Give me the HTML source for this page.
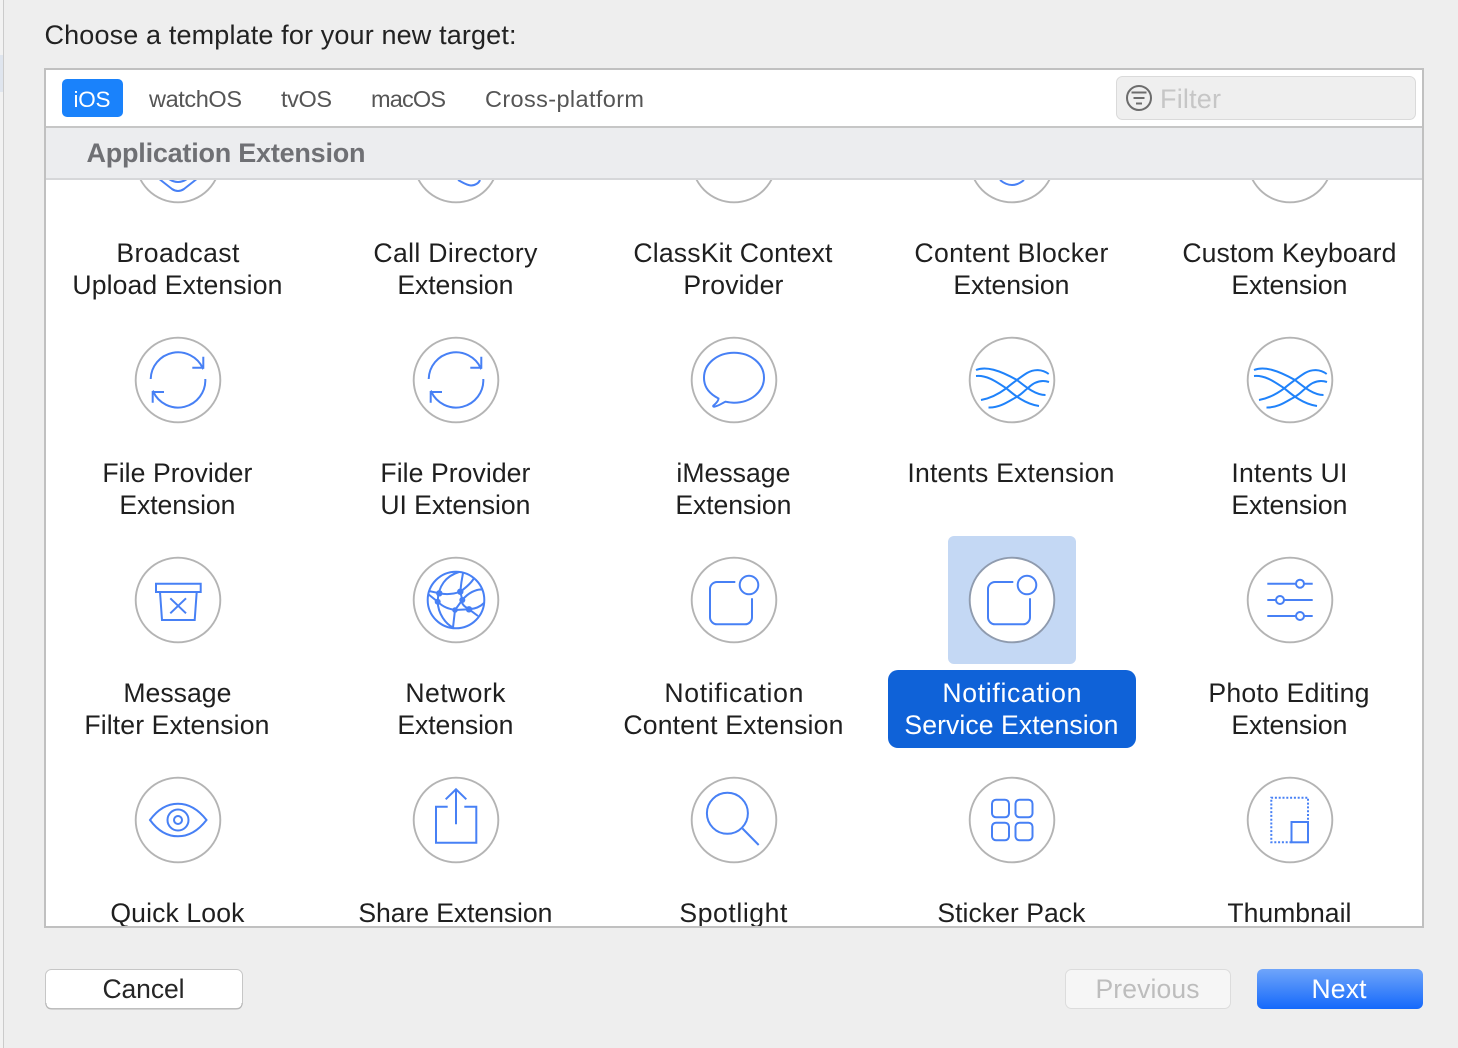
<!DOCTYPE html>
<html><head><meta charset="utf-8"><style>
html,body{margin:0;padding:0;width:1458px;height:1048px;overflow:hidden;background:#eee}
svg{display:block}
text{font-family:"Liberation Sans",sans-serif}
.l{font-size:26.6px;fill:#1f1f1f}
.t{font-size:23.5px;fill:#555}
.i{fill:none;stroke:#4780f5;stroke-width:2}
.c{fill:#fff;stroke:#b4b4b4;stroke-width:1.9}
</style></head><body>
<svg width="1458" height="1048" viewBox="0 0 1458 1048" xmlns="http://www.w3.org/2000/svg">
<defs><linearGradient id="n" x1="0" y1="0" x2="0" y2="1"><stop offset="0" stop-color="#6fa5fa"/><stop offset="1" stop-color="#1569fb"/></linearGradient></defs>
<rect width="1458" height="1048" fill="#eeeeee"/>
<rect x="0" y="0" width="3" height="1048" fill="#f2f2f2"/>
<rect x="0" y="55" width="3" height="37" fill="#dfe5ee"/>
<rect x="3" y="0" width="1" height="1048" fill="#cbcbcb"/>
<rect x="45" y="69" width="1378" height="858" fill="#fff"/>

<rect x="948" y="536" width="128" height="128" rx="6" fill="#c4d8f4"/>
<rect x="888" y="670" width="248" height="78" rx="10" fill="#0f62d8"/>

<!-- row 1 -->
<g transform="translate(178,160)"><circle class="c" r="42.3"/><path class="i" d="M-20 18L-6 29Q0 33 6 29L20 18M-9 19Q0 25 9 19"/></g>
<g transform="translate(456,160)"><circle class="c" r="42.3"/><path class="i" d="M2 20C6 22 10 25 15 25.5C19 25.5 23 23 24 20"/></g>
<g transform="translate(734,160)"><circle class="c" r="42.3"/></g>
<g transform="translate(1012,160)"><circle class="c" r="42.3"/><path class="i" d="M-12 20Q0 30 12 20"/></g>
<g transform="translate(1290,160)"><circle class="c" r="42.3"/></g>

<!-- row 2 -->
<g transform="translate(178,380)"><circle class="c" r="42.3"/><path class="i" d="M-27.3 -1A27.3 27.3 0 0 1 24.8 -11.8L25.3 -12.3M14.3 -12.3H25.3V-23.3M27.3 -1A27.3 27.3 0 0 1 -24.8 11.6L-25.3 12M-14 12H-25.3V22.7"/></g>
<g transform="translate(456,380)"><circle class="c" r="42.3"/><path class="i" d="M-27.3 -1A27.3 27.3 0 0 1 24.8 -11.8L25.3 -12.3M14.3 -12.3H25.3V-23.3M27.3 -1A27.3 27.3 0 0 1 -24.8 11.6L-25.3 12M-14 12H-25.3V22.7"/></g>
<g transform="translate(734,380)"><circle class="c" r="42.3"/><path class="i" d="M-8.5 21.7C-11 22.5 -15 26 -20 26.7C-21 26.7 -21 26 -20.5 25.5C-17.5 23 -15.5 21 -15.5 18.5C-24 14 -30 8 -30 -2.3C-30 -16 -17 -27.3 0 -27.3C17 -27.3 30 -16 30 -2.3C30 11.5 17 22.7 0 22.7C-3 22.7 -6 22.2 -8.5 21.7Z"/></g>
<g transform="translate(1012,380)"><circle class="c" r="42.3"/><path class="i" style="stroke:#1f82fa" d="M-36 -10C-26 -14 -13 -10 5 0C15 8 24 15 33.5 15M-36 -4C-24 -5 -14 3 -5.7 8.3C0 13 12 24 27 26M-31 20C-20 18 -12 13 -5.7 8.3C-2 5 10 -4 15 -7C22 -11 30 -11 36.7 -6M-23.5 27.5C-12 28 -3 21 5 16.7C10 14 13 10 15.7 8.3C21 3 28 -1 37 2"/></g>
<g transform="translate(1290,380)"><circle class="c" r="42.3"/><path class="i" style="stroke:#1f82fa" d="M-36 -10C-26 -14 -13 -10 5 0C15 8 24 15 33.5 15M-36 -4C-24 -5 -14 3 -5.7 8.3C0 13 12 24 27 26M-31 20C-20 18 -12 13 -5.7 8.3C-2 5 10 -4 15 -7C22 -11 30 -11 36.7 -6M-23.5 27.5C-12 28 -3 21 5 16.7C10 14 13 10 15.7 8.3C21 3 28 -1 37 2"/></g>

<!-- row 3 -->
<g transform="translate(178,600)"><circle class="c" r="42.3"/><path class="i" d="M-22 -16.3H22.7V-8H-22ZM-18 -8L-16 20H16.7L18.7 -8M-7.7 -1.7L8 13.3M8 -1.7L-7.7 13.3"/></g>
<g transform="translate(456,600)"><circle class="c" r="42.3"/>
<circle class="i" r="28.3"/>
<path class="i" d="M3 -28C-10 -24 -18 -14 -18.3 1.7C-18 14 -10 24 -3 27.5M-27 -9L-16.7 -6.7C-8 -5 -2 -6 4.3 -8.3C5 -16 6 -22 7 -27M4.3 -8.3L6.3 0L-1 10L-3 27.5M-28 -6L-18.3 1.7C-12 8 -6 9 -1 10L13 9.3L22 16M6.3 0C4 5 13 9 13 9.3M4.3 -8.3C12 -14 16 -18 18 -22M6.3 0C12 -7 20 -11 26 -10.5M13 9.3C18 9 24 7 28 3"/>
<g fill="#4780f5"><circle cx="-16.700" cy="-6.700" r="3.200"/><circle cx="4.300" cy="-8.300" r="3.200"/><circle cx="6.300" cy="0" r="3"/><circle cx="-18.300" cy="1.700" r="3"/><circle cx="-1" cy="10" r="2.800"/><circle cx="13" cy="9.300" r="3.200"/></g></g>
<g transform="translate(734,600)"><circle class="c" r="42.3"/><path class="i" d="M1.300 -18H-17A7 7 0 0 0 -24 -11V17.300A7 7 0 0 0 -17 24.300H11A7 7 0 0 0 18 17.300V-1.700"/><circle class="i" cx="15" cy="-15" r="9.300"/></g>
<g transform="translate(1012,600)"><circle class="c" style="stroke:#8f9bae" r="42.3"/><path class="i" d="M1.300 -18H-17A7 7 0 0 0 -24 -11V17.300A7 7 0 0 0 -17 24.300H11A7 7 0 0 0 18 17.300V-1.700"/><circle class="i" cx="15" cy="-15" r="9.300"/></g>
<g transform="translate(1290,600)"><circle class="c" r="42.3"/><path class="i" d="M-22.700 -16.300H22.700M-22.700 0H22.700M-22.700 16H22.700"/><g class="i" style="fill:#fff"><circle cx="10" cy="-16.300" r="4"/><circle cx="-10" cy="0" r="4"/><circle cx="10" cy="16" r="4"/></g></g>

<!-- row 4 -->
<g transform="translate(178,820)"><circle class="c" r="42.3"/><path class="i" d="M-28 0C-20 -11 -10 -16.300 0 -16.300C10 -16.300 20 -11 28.500 0C20 11 10 16.300 0 16.300C-10 16.300 -20 11 -28 0Z"/><circle class="i" r="10.500"/><circle class="i" r="4"/></g>
<g transform="translate(456,820)"><circle class="c" r="42.3"/><path class="i" d="M-8.300 -13.300H-20V22.700H20.300V-13.300H8.300M0 4.300V-30.700M-10.300 -20.700L0 -30.700L10.300 -20.700"/></g>
<g transform="translate(734,820)"><circle class="c" r="42.3"/><circle class="i" cx="-6.600" cy="-6.700" r="20.500"/><path class="i" d="M8.500 8.500L24.700 25"/></g>
<g transform="translate(1012,820)"><circle class="c" r="42.3"/><rect class="i" x="-20" y="-20.300" width="17" height="17.600" rx="4"/><rect class="i" x="3.500" y="-20.300" width="17" height="17.600" rx="4"/><rect class="i" x="-20" y="2.700" width="17" height="17.600" rx="4"/><rect class="i" x="3.500" y="2.700" width="17" height="17.600" rx="4"/></g>
<g transform="translate(1290,820)"><circle class="c" r="42.3"/><path class="i" stroke-dasharray="2 1.800" d="M1.500 22.300H-18.700V-22.300H18V2"/><rect class="i" x="1.500" y="2" width="16.500" height="20.300"/></g>

<!-- labels -->
<g class="l" transform="translate(-0.6,0)">
<text x="117" y="262" textLength="123">Broadcast</text><text x="73" y="294" textLength="210">Upload Extension</text>
<text x="374" y="262" textLength="164">Call Directory</text><text x="398" y="294" textLength="116">Extension</text>
<text x="634" y="262" textLength="199">ClassKit Context</text><text x="684" y="294" textLength="100">Provider</text>
<text x="915" y="262" textLength="194">Content Blocker</text><text x="954" y="294" textLength="116">Extension</text>
<text x="1183" y="262" textLength="214">Custom Keyboard</text><text x="1232" y="294" textLength="116">Extension</text>

<text x="103" y="482" textLength="150">File Provider</text><text x="120" y="514" textLength="116">Extension</text>
<text x="381" y="482" textLength="150">File Provider</text><text x="381" y="514" textLength="150">UI Extension</text>
<text x="677" y="482" textLength="114">iMessage</text><text x="676" y="514" textLength="116">Extension</text>
<text x="908" y="482" textLength="207">Intents Extension</text>
<text x="1232" y="482" textLength="116">Intents UI</text><text x="1232" y="514" textLength="116">Extension</text>

<text x="124" y="702" textLength="108">Message</text><text x="85" y="734" textLength="185">Filter Extension</text>
<text x="406" y="702" textLength="100">Network</text><text x="398" y="734" textLength="116">Extension</text>
<text x="665" y="702" textLength="139">Notification</text><text x="624" y="734" textLength="220">Content Extension</text>
<text x="943" y="702" textLength="139" style="fill:#fff">Notification</text><text x="905" y="734" textLength="214" style="fill:#fff">Service Extension</text>
<text x="1209" y="702" textLength="161">Photo Editing</text><text x="1232" y="734" textLength="116">Extension</text>

<text x="111" y="922" textLength="134">Quick Look</text>
<text x="359" y="922" textLength="194">Share Extension</text>
<text x="680" y="922" textLength="108">Spotlight</text>
<text x="938" y="922" textLength="148">Sticker Pack</text>
<text x="1228" y="922" textLength="124">Thumbnail</text>
</g>

<!-- clip bottom -->
<rect x="44" y="926" width="1380" height="122" fill="#eeeeee"/>
<!-- top white bar and header -->
<rect x="45" y="69" width="1378" height="58" fill="#fff"/>
<rect x="45" y="128" width="1378" height="50" fill="#ecedef"/>
<rect x="45" y="126" width="1378" height="2" fill="#c6c6c6"/>
<rect x="45" y="178" width="1378" height="2" fill="#d6d7d9"/>
<rect x="45" y="69" width="1378" height="858" fill="none" stroke="#c0c0c0" stroke-width="2"/>

<text x="44.500" y="44" font-size="27" fill="#222" textLength="472">Choose a template for your new target:</text>

<rect x="62" y="79" width="61" height="38" rx="5" fill="#1a82fb"/>
<text x="73.500" y="107" font-size="22.500" fill="#fff" textLength="37">iOS</text>
<text class="t" x="149" y="107" textLength="93">watchOS</text>
<text class="t" x="281" y="107" textLength="51">tvOS</text>
<text class="t" x="371" y="107" textLength="75">macOS</text>
<text class="t" x="485" y="107" textLength="159">Cross-platform</text>

<rect x="1116.500" y="76.500" width="299" height="43" rx="6" fill="#efefef" stroke="#dadada"/>
<circle cx="1139" cy="98" r="12" fill="none" stroke="#6c6c6c" stroke-width="2"/>
<path d="M1131.500 92.500H1146.500M1133.500 98H1144.500M1136 103.500H1142" fill="none" stroke="#6c6c6c" stroke-width="2"/>
<text x="1160" y="108" font-size="27" fill="#c6c6c6" textLength="61">Filter</text>

<text x="86.500" y="162" font-size="27" font-weight="700" fill="#6f7074" textLength="279">Application Extension</text>

<!-- buttons -->
<rect x="45.500" y="969.500" width="197" height="39" rx="6" fill="#fff" stroke="#c6c6c6"/>
<path d="M46 1003Q46 1009 52 1009H236Q242 1009 242 1003" fill="none" stroke="#b5b5b5"/>
<text x="102.500" y="998" font-size="26.500" fill="#262626" textLength="82">Cancel</text>
<rect x="1065.500" y="969.500" width="165" height="39" rx="6" fill="#f6f6f6" stroke="#dcdcdc"/>
<text x="1095.500" y="998" font-size="26.500" fill="#bdbdbd" textLength="104">Previous</text>
<rect x="1257" y="969" width="166" height="40" rx="6" fill="url(#n)"/>
<text x="1311.500" y="998" font-size="26.500" fill="#fff" textLength="55">Next</text>
</svg>
</body></html>
